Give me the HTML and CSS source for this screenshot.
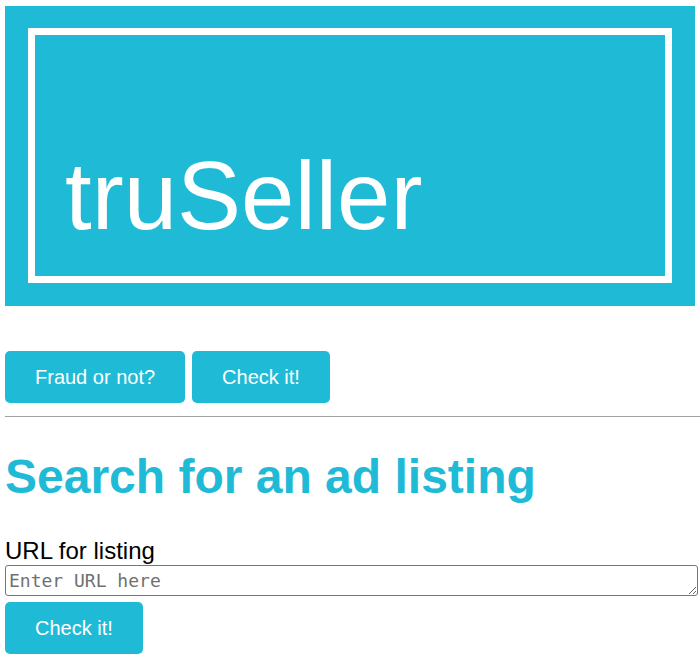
FILE: index.html
```html
<!DOCTYPE html>
<html lang="en">
<head>
<meta charset="utf-8">
<title>truSeller</title>
<link rel="stylesheet" href="styles.css">
</head>
<body>
<header class="banner">
  <div class="banner-frame">
    <div class="brand">truSeller</div>
  </div>
</header>
<nav class="nav">
  <button class="btn" type="button">Fraud or not?</button>
  <button class="btn" type="button">Check it!</button>
</nav>
<hr class="divider">
<main class="search">
  <h1 class="search-title">Search for an ad listing</h1>
  <form class="search-form">
    <label class="field-label" for="url">URL for listing</label>
    <textarea class="url-input" id="url" placeholder="Enter URL here"></textarea>
    <button class="btn btn-submit" type="button">Check it!</button>
  </form>
</main>
</body>
</html>
```

FILE: styles.css
```css
html, body {
  margin: 0;
  padding: 0;
  background: #ffffff;
}

body {
  font-family: "Liberation Sans", Arial, sans-serif;
  color: #000;
}

.banner {
  margin: 6px 5px 0 5px;
  height: 300px;
  background: #1fbad6;
  padding: 22px 23px 23px 23px;
  box-sizing: border-box;
}

.banner-frame {
  border: 7px solid #ffffff;
  height: 100%;
  box-sizing: border-box;
  padding: 106px 0 0 30px;
}

.brand {
  color: #ffffff;
  font-size: 96px;
  line-height: normal;
}

.nav {
  display: flex;
  gap: 7px;
  margin: 45px 0 0 5px;
}

.btn {
  font-family: "Liberation Sans", Arial, sans-serif;
  font-size: 20px;
  line-height: 22px;
  color: #ffffff;
  background: #1fbad6;
  border: none;
  border-radius: 5px;
  padding: 15px 30px;
  margin: 0;
  cursor: pointer;
}

.divider {
  margin: 13px 0 0 5px;
  border: none;
  border-top: 1px solid #a3a3a3;
  height: 0;
}

.search {
  margin: 0 0 0 5px;
}

.search-title {
  margin: 32px 0 33px 0;
  font-size: 48px;
  font-weight: bold;
  color: #1fbad6;
  line-height: normal;
}

.search-form {
  display: flex;
  flex-direction: column;
  align-items: flex-start;
}

.field-label {
  font-size: 24px;
  line-height: normal;
}

.url-input {
  width: 693px;
  height: 31px;
  box-sizing: border-box;
  margin: 0;
  padding: 4px 3px 0 3px;
  border: 1px solid #767676;
  border-radius: 3px;
  font-family: "DejaVu Sans Mono", monospace;
  font-size: 18px;
  line-height: 21px;
}

.url-input::placeholder {
  color: #707070;
}

.btn-submit {
  margin-top: 6px;
}
```
